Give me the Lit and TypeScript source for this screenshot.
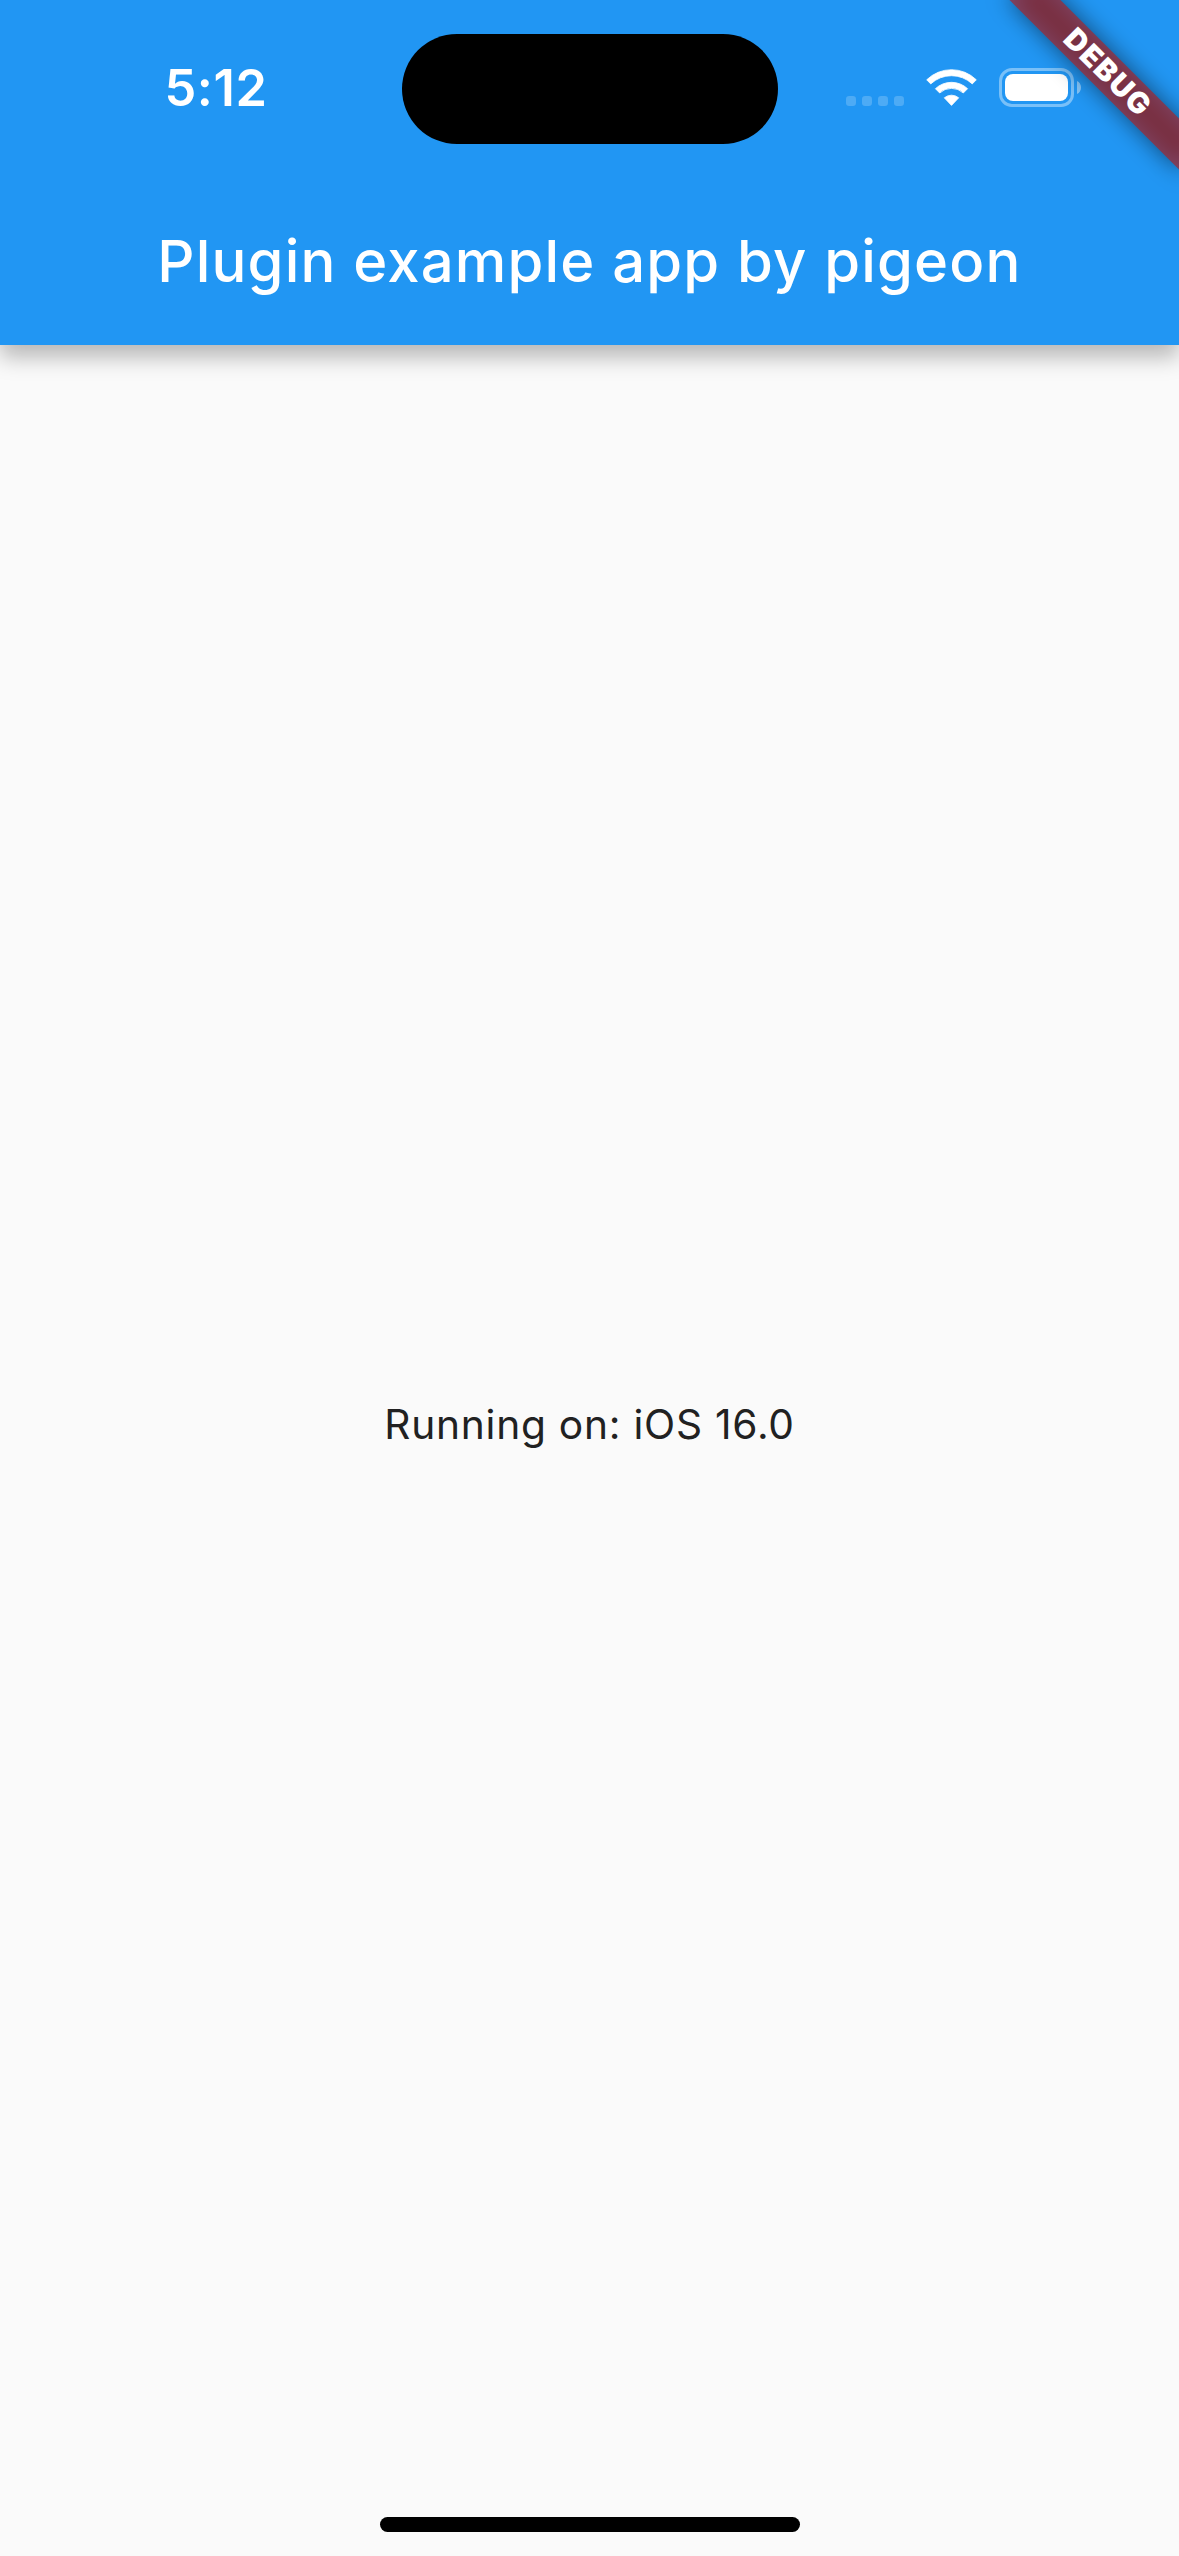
import { LitElement, html, css } from "lit";
import { customElement, property } from "lit/decorators.js";

@customElement("status-bar")
class StatusBar extends LitElement {
  @property() time = "";

  static styles = css`
    :host {
      display: grid;
      grid-template-columns: 402px 376px 1fr;
      height: 177px;
      box-sizing: border-box;
      padding-top: 33px;
      align-items: start;
    }
    .time {
      padding-left: 30px;
      padding-top: 25px;
      text-align: center;
      font-size: 50.5px;
      line-height: 60px;
      font-weight: 600;
      letter-spacing: 0.6px;
      color: #fff;
    }
    .island {
      height: 110px;
      margin-top: 1px;
      border-radius: 55px;
      background: #000;
    }
    .icons {
      display: flex;
      align-items: flex-start;
      padding-left: 68px;
      padding-top: 35px;
    }
    .signal { margin-right: 22px; }
    .wifi { margin-right: 21px; }
    svg { display: block; flex: none; }
  `;

  render() {
    return html`
      <div class="time">${this.time}</div>
      <div class="island"></div>
      <div class="icons">
        <svg class="signal" width="58" height="39" viewBox="0 0 58 39" fill="#fff" fill-opacity="0.2">
          <rect x="0" y="28" width="10" height="10" rx="3.2" />
          <rect x="16" y="28" width="10" height="10" rx="3.2" />
          <rect x="32" y="28" width="10" height="10" rx="3.2" />
          <rect x="48" y="28" width="10" height="10" rx="3.2" />
        </svg>
        <svg class="wifi" width="52" height="39" viewBox="0 0 52 39" fill="#fff" stroke="#fff" stroke-width="0.8" stroke-linejoin="round">
          <path d="M0.7 11.800A35.500 35.500 0 0 1 50.300 11.800L46.300 15.900A30.500 30.500 0 0 0 4.700 15.900Z" />
          <path d="M9.400 20.700A23.500 23.500 0 0 1 41.600 20.700L37.300 25A17.300 17.300 0 0 0 13.700 25Z" />
          <path d="M18.300 29.800A11.200 11.200 0 0 1 32.700 29.800L25.500 37.400Z" />
        </svg>
        <svg width="84" height="39" viewBox="0 0 84 39" fill="#fff">
          <rect x="1.500" y="1.500" width="72" height="36" rx="11.500" fill="none" stroke="#fff" stroke-width="3" stroke-opacity="0.4" />
          <rect x="6" y="6" width="63" height="27" rx="8" />
          <path d="M78 13C80.500 14 82 16.600 82 19.500S80.500 25 78 26Z" fill-opacity="0.45" />
        </svg>
      </div>
    `;
  }
}

@customElement("debug-banner")
class DebugBanner extends LitElement {
  static styles = css`
    :host {
      position: absolute;
      top: 0;
      right: 0;
      width: 260px;
      height: 260px;
      overflow: hidden;
      pointer-events: none;
    }
    .band, .shade {
      position: absolute;
      left: 67.9px;
      top: 54.1px;
      width: 240px;
      height: 36px;
      transform: rotate(45deg);
    }
    .shade {
      background: rgba(0, 0, 0, 0.5);
      filter: blur(11.9px);
    }
    .band {
      background: rgba(183, 28, 28, 0.627);
      color: #fff;
      font-size: 29.5px;
      line-height: 35px;
      font-weight: 900;
      letter-spacing: 1.5px;
      text-indent: 2px;
      text-align: center;
    }
  `;

  render() {
    return html`<div class="shade"></div><div class="band">DEBUG</div>`;
  }
}

@customElement("app-root")
class AppRoot extends LitElement {
  static styles = css`
    :host {
      display: flex;
      flex-direction: column;
      position: relative;
      width: 1179px;
      height: 2556px;
      overflow: hidden;
      background: #fafafa;
      font-family: Inter, "Liberation Sans", sans-serif;
    }
    .bar {
      flex: none;
      height: 345px;
      background: #2196f3;
      box-shadow: 0 12px 21px rgba(0, 0, 0, 0.27);
    }
    .title {
      height: 168px;
      line-height: 168px;
      text-align: center;
      font-size: 58px;
      font-weight: 500;
      letter-spacing: 1.18px;
      color: #fff;
      white-space: nowrap;
    }
    .body {
      flex: 1;
      display: flex;
      align-items: center;
      justify-content: center;
      padding-bottom: 12px;
      font-size: 40.7px;
      line-height: 50px;
      letter-spacing: 0.75px;
      color: #212121;
    }
    .foot {
      flex: none;
      display: flex;
      justify-content: center;
      height: 39px;
    }
    .home {
      width: 420px;
      height: 15px;
      border-radius: 8px;
      background: #000;
    }
  `;

  render() {
    return html`
      <div class="bar">
        <status-bar time="5:12"></status-bar>
        <div class="title">Plugin example app by pigeon</div>
      </div>
      <div class="body">Running on: iOS 16.0</div>
      <div class="foot"><div class="home"></div></div>
      <debug-banner></debug-banner>
    `;
  }
}
